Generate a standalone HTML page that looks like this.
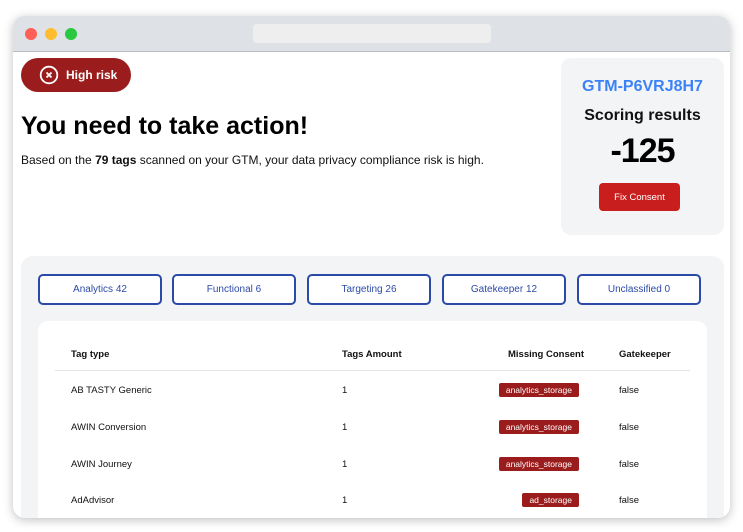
<!DOCTYPE html>
<html><head><meta charset="utf-8"><style>
*{margin:0;padding:0;box-sizing:border-box}
body{width:743px;height:532px;background:#fff;font-family:"Liberation Sans",sans-serif;position:relative;overflow:hidden}
.win{position:absolute;left:13px;top:16px;width:717px;height:502px;border-radius:12px;background:#fff;box-shadow:0 2px 10px rgba(0,0,0,.25);overflow:hidden}
.c{position:absolute;left:-13px;top:-16px;width:743px;height:532px;overflow:hidden}
.bar{position:absolute;left:13px;top:16px;width:717px;height:36px;background:#dee1e6;border-bottom:1px solid #b9bcc1}
.dot{position:absolute;top:12px;width:12px;height:12px;border-radius:50%}
.url{position:absolute;left:240px;top:8px;width:238px;height:19px;background:#eeeeef;border-radius:4px}
.a{position:absolute;white-space:nowrap}
.tab{position:absolute;top:274px;width:124px;height:31px;border:2px solid #2b4aa8;border-radius:5px;background:#fff;color:#2b4aa8;font-size:10px;text-align:center;line-height:28px}
.th{font-size:9.5px;font-weight:bold;color:#111}
.td{font-size:9.5px;color:#111}
.bd{position:absolute;height:14px;background:#9b1c1c;color:#fff;font-size:8.5px;line-height:14px;padding:0 7px;border-radius:2px;right:164px}
</style></head><body>
<div class="win"><div class="c">
<div class="bar"><div class="dot" style="left:12px;background:#fe5f57"></div><div class="dot" style="left:32px;background:#febc2e"></div><div class="dot" style="left:52px;background:#28c840"></div><div class="url"></div></div>
<div class="a" style="left:21px;top:58px;width:110px;height:34px;border-radius:17px;background:#9b1c1c"></div>
<svg class="a" style="left:39px;top:65px" width="20" height="20" viewBox="0 0 20 20"><circle cx="10" cy="10" r="8.3" fill="none" stroke="#fff" stroke-width="1.8"/><path d="M7.5 7.5l5 5M12.5 7.5l-5 5" stroke="#fff" stroke-width="1.8"/></svg>
<div class="a" style="left:66px;top:68px;color:#fff;font-size:12px;font-weight:bold">High risk</div>
<div class="a" style="left:21px;top:112px;font-size:25px;font-weight:bold;color:#000">You need to take action!</div>
<div class="a" style="left:21px;top:153px;font-size:12px;color:#111">Based on the <b>79 tags</b> scanned on your GTM, your data privacy compliance risk is high.</div>
<div class="a" style="left:561px;top:58px;width:163px;height:177px;background:#f3f4f6;border-radius:10px"></div>
<div class="a" style="left:561px;top:78px;width:163px;text-align:center;color:#3b82f6;font-size:16px;font-weight:bold">GTM-P6VRJ8H7</div>
<div class="a" style="left:561px;top:107px;width:163px;text-align:center;color:#111;font-size:16px;font-weight:bold">Scoring results</div>
<div class="a" style="left:561px;top:132px;width:163px;text-align:center;color:#000;font-size:34px;font-weight:bold;letter-spacing:-1px">-125</div>
<div class="a" style="left:599px;top:183px;width:81px;height:28px;background:#c81e1e;border-radius:4px;color:#fff;font-size:9.5px;text-align:center;line-height:29px">Fix Consent</div>
<div class="a" style="left:21px;top:256px;width:703px;height:270px;background:#f3f4f6;border-radius:12px"></div>
<div class="tab" style="left:38px">Analytics 42</div>
<div class="tab" style="left:172px">Functional 6</div>
<div class="tab" style="left:307px">Targeting 26</div>
<div class="tab" style="left:442px">Gatekeeper 12</div>
<div class="tab" style="left:577px">Unclassified 0</div>
<div class="a" style="left:38px;top:321px;width:669px;height:205px;background:#fff;border-radius:10px"></div>
<div class="a th" style="left:71px;top:349px">Tag type</div>
<div class="a th" style="left:342px;top:349px">Tags Amount</div>
<div class="a th" style="left:508px;top:349px">Missing Consent</div>
<div class="a th" style="left:619px;top:349px">Gatekeeper</div>
<div class="a" style="left:55px;top:370px;width:635px;height:1px;background:#e3e4e6"></div>
<div class="a td" style="left:71px;top:385px">AB TASTY Generic</div><div class="a td" style="left:342px;top:385px">1</div><div class="bd" style="top:383px">analytics_storage</div><div class="a td" style="left:619px;top:385px">false</div>
<div class="a td" style="left:71px;top:422px">AWIN Conversion</div><div class="a td" style="left:342px;top:422px">1</div><div class="bd" style="top:420px">analytics_storage</div><div class="a td" style="left:619px;top:422px">false</div>
<div class="a td" style="left:71px;top:459px">AWIN Journey</div><div class="a td" style="left:342px;top:459px">1</div><div class="bd" style="top:457px">analytics_storage</div><div class="a td" style="left:619px;top:459px">false</div>
<div class="a td" style="left:71px;top:495px">AdAdvisor</div><div class="a td" style="left:342px;top:495px">1</div><div class="bd" style="top:493px">ad_storage</div><div class="a td" style="left:619px;top:495px">false</div>
</div></div>
</body></html>
